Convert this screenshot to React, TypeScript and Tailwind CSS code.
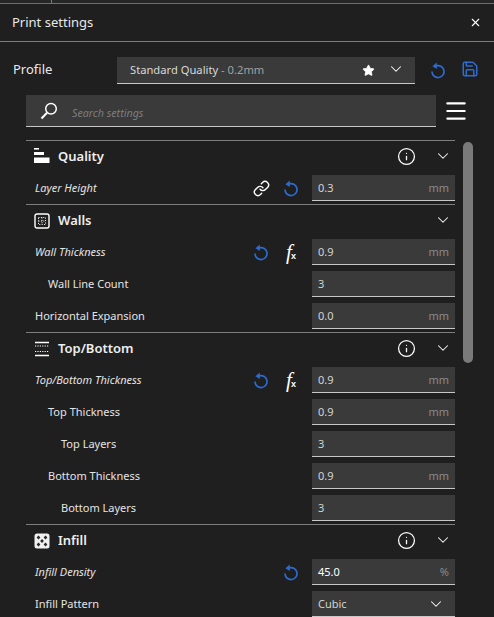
import { ChevronDown, Info, Link, Menu, Save, Star, X } from 'lucide-react'

interface RowData {
  label: string
  value: string
  unit?: string
  indent?: 0 | 1 | 2
  italic?: boolean
  link?: boolean
  reset?: boolean
  fx?: boolean
  select?: boolean
  bright?: boolean
}

interface SectionData {
  title: string
  icon: 'quality' | 'walls' | 'topbottom' | 'infill'
  info?: boolean
  rows: RowData[]
}

const sections: SectionData[] = [
  {
    title: 'Quality',
    icon: 'quality',
    info: true,
    rows: [{ label: 'Layer Height', value: '0.3', unit: 'mm', italic: true, link: true, reset: true }],
  },
  {
    title: 'Walls',
    icon: 'walls',
    rows: [
      { label: 'Wall Thickness', value: '0.9', unit: 'mm', italic: true, reset: true, fx: true },
      { label: 'Wall Line Count', value: '3', indent: 1 },
      { label: 'Horizontal Expansion', value: '0.0', unit: 'mm' },
    ],
  },
  {
    title: 'Top/Bottom',
    icon: 'topbottom',
    info: true,
    rows: [
      { label: 'Top/Bottom Thickness', value: '0.9', unit: 'mm', italic: true, reset: true, fx: true },
      { label: 'Top Thickness', value: '0.9', unit: 'mm', indent: 1 },
      { label: 'Top Layers', value: '3', indent: 2 },
      { label: 'Bottom Thickness', value: '0.9', unit: 'mm', indent: 1 },
      { label: 'Bottom Layers', value: '3', indent: 2 },
    ],
  },
  {
    title: 'Infill',
    icon: 'infill',
    info: true,
    rows: [
      { label: 'Infill Density', value: '45.0', unit: '%', italic: true, reset: true, bright: true },
      { label: 'Infill Pattern', value: 'Cubic', select: true },
    ],
  },
]

function ResetIcon() {
  return (
    <svg width="14" height="17" viewBox="0 0 14 17" fill="none" className="text-[#2c6cd0]">
      <path d="M5 3.9A6 6 0 1 1 1 10" stroke="currentColor" strokeWidth="1.7" strokeLinecap="round" />
      <path d="M5.8 0.6V7L1.4 4.2Z" fill="currentColor" />
    </svg>
  )
}

function FxIcon() {
  return (
    <span className="flex items-end text-white">
      <span className="font-['Liberation_Serif',serif] text-[21px] leading-[20px] italic">f</span>
      <span className="-ml-[1px] font-['Liberation_Sans',sans-serif] text-[9px] leading-[11px] font-bold">x</span>
    </span>
  )
}

function SectionIcon({ icon }: { icon: SectionData['icon'] }) {
  if (icon === 'quality') {
    return (
      <svg width="16" height="16" viewBox="0 0 16 16" fill="white" className="-mt-[2px]">
        <rect x="0" y="0" width="5" height="1.6" />
        <rect x="0" y="4" width="10" height="3" />
        <rect x="0" y="9.5" width="15.5" height="5.5" />
      </svg>
    )
  }
  if (icon === 'walls') {
    return (
      <svg width="16" height="16" viewBox="0 0 16 16" fill="none" stroke="white">
        <rect x="1" y="1" width="14" height="14" rx="2" strokeWidth="1.4" />
        <path d="M4.5 4.5H11.5V11.5H4.5Z" strokeWidth="1" strokeDasharray="1 1.4" />
        <path d="M8 4.5V11.5M4.5 8H11.5" strokeWidth="1" strokeDasharray="1 1.4" />
      </svg>
    )
  }
  if (icon === 'topbottom') {
    return (
      <svg width="16" height="16" viewBox="0 0 16 16" fill="none" stroke="white">
        <path d="M1 1.5H15M1 14.5H15" strokeWidth="1.3" />
        <path d="M1 5H15M1 10.5H15" strokeWidth="1.2" strokeDasharray="1.2 1.2" />
      </svg>
    )
  }
  return (
    <svg width="16" height="16" viewBox="0 0 16 16">
      <rect x="0.5" y="0.5" width="15" height="15" rx="2.5" fill="#f0f0f0" />
      <g fill="#2a2a2a">
        <path d="M4.5 2.6L6.4 4.5L4.5 6.4L2.6 4.5Z" />
        <path d="M11.5 2.6L13.4 4.5L11.5 6.4L9.6 4.5Z" />
        <path d="M8 6.1L9.9 8L8 9.9L6.1 8Z" />
        <path d="M4.5 9.6L6.4 11.5L4.5 13.4L2.6 11.5Z" />
        <path d="M11.5 9.6L13.4 11.5L11.5 13.4L9.6 11.5Z" />
      </g>
    </svg>
  )
}

function SettingRow({ row }: { row: RowData }) {
  const indent = row.indent === 2 ? 'pl-[35px]' : row.indent === 1 ? 'pl-[22px]' : 'pl-[9px]'
  return (
    <div className="flex h-[32px] items-center">
      <span className={`${indent} flex-1 text-[11px] text-[#e4e4e4] ${row.italic ? 'italic' : ''}`}>{row.label}</span>
      <div className="mr-[6px] grid grid-cols-[30px_30px] items-center justify-items-center">
        <div className="flex h-[20px] items-center">
          {row.link && <Link size={17} strokeWidth={2} className="text-white" />}
          {row.reset && row.fx && <ResetIcon />}
        </div>
        <div className="flex h-[20px] items-center">
          {row.fx && <FxIcon />}
          {row.reset && !row.fx && <ResetIcon />}
        </div>
      </div>
      <div className="flex h-[26px] w-[143px] items-center justify-between border-b border-[#c8c8c8] bg-[#3a3a3a] px-[6px] pt-[1px]">
        <span className={`text-[11px] ${row.bright ? 'text-white' : 'text-[#d4d4d4]'}`}>{row.value}</span>
        {row.unit && <span className="text-[11px] text-[#8a8a8a]">{row.unit}</span>}
        {row.select && <ChevronDown size={18} strokeWidth={1.4} className="mr-[4px] text-white" />}
      </div>
    </div>
  )
}

export default function App() {
  return (
    <div className="relative h-[617px] w-[494px] overflow-hidden bg-[#1f1f1f] font-['Noto_Sans',sans-serif]">
      {/* Window top edge */}
      <div className="relative h-[4px] border-b border-[#6f6f6f] bg-[#262626]">
        <div className="absolute top-0 left-[51px] h-[3px] w-px bg-[#2a93b8]" />
      </div>

      {/* Header */}
      <div className="flex h-[38px] items-center justify-between border-b border-[#7d7d7d] pr-[12px] pl-[12px]">
        <span className="text-[13px] text-[#e8e8e8]">Print settings</span>
        <X size={13} strokeWidth={2} className="text-white" />
      </div>

      {/* Profile */}
      <div className="mt-[14px] flex h-[28px] items-center">
        <span className="w-[117px] pl-[13px] text-[13px] text-[#e8e8e8]">Profile</span>
        <div className="flex h-[27px] w-[298px] items-center justify-between border-b border-[#c8c8c8] bg-[#3a3a3a] pr-[10px] pl-[13px] pt-[1px]">
          <span className="text-[11.2px] text-[#d8d8d8]">
            Standard Quality <span className="text-[#a0a0a0]">- 0.2mm</span>
          </span>
          <div className="flex items-center gap-[12px]">
            <Star size={13} fill="white" strokeWidth={1.5} className="text-white" />
            <ChevronDown size={18} strokeWidth={1.4} className="-mt-[2px] text-white" />
          </div>
        </div>
        <div className="ml-[16px]">
          <ResetIcon />
        </div>
        <Save size={18} strokeWidth={2} className="-mt-[2px] ml-[16px] text-[#2c6cd0]" />
      </div>

      {/* Search */}
      <div className="mt-[11px] flex items-center pl-[26px]">
        <div className="flex h-[32px] w-[410px] items-center border-b border-[#c8c8c8] bg-[#3a3a3a] pl-[14px]">
          <svg width="18" height="18" viewBox="0 0 18 18" fill="none" stroke="white" strokeWidth="1.5">
            <circle cx="11" cy="6.8" r="5.3" />
            <path d="M7 10.8L1.5 16.5" strokeWidth="2" />
          </svg>
          <span className="ml-[14px] pt-[5px] text-[10.7px] text-[#7d7d7d] italic">Search settings</span>
        </div>
        <Menu size={26} strokeWidth={2} className="ml-[7px] text-white" />
      </div>

      {/* Settings list */}
      <div className="relative mt-[13px] ml-[26px] w-[429px]">
        {sections.map((section) => (
          <div key={section.title}>
            <div className="flex h-[32px] items-center border-t border-[#7d7d7d]">
              <div className="ml-[8px] flex w-[16px] justify-center">
                <SectionIcon icon={section.icon} />
              </div>
              <span className="ml-[8px] flex-1 text-[13px] font-semibold text-[#eeeeee]">{section.title}</span>
              {section.info && <Info size={19} strokeWidth={1.6} className="mr-[18px] -mt-[1px] text-white" />}
              <ChevronDown size={18} strokeWidth={1.4} className="mr-[3px] -mt-[2px] text-white" />
            </div>
            {section.rows.map((row) => (
              <SettingRow key={row.label} row={row} />
            ))}
          </div>
        ))}
      </div>

      {/* Scrollbar */}
      <div className="absolute top-[142px] left-[463px] h-[221px] w-[10px] rounded-full bg-[#7a7a7a]" />
    </div>
  )
}
